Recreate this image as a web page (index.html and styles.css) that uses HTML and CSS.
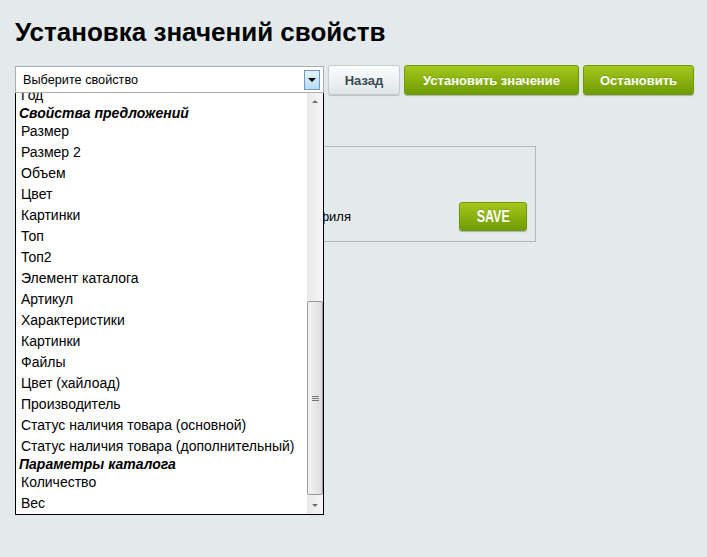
FILE: index.html
```html
<!DOCTYPE html>
<html lang="ru">
<head>
    <meta charset="UTF-8">
    <title>Установка значений свойств</title>
    <link rel="stylesheet" href="styles.css">
</head>
<body>
    <h1 class="page-title">Установка значений свойств</h1>

    <div class="toolbar">
        <div class="select-wrap">
            <div class="select">
                <span class="select-text">Выберите свойство</span>
                <span class="select-arrow"></span>
            </div>
            <div class="dropdown">
                <div class="options">
                    <div class="opt">Год</div>
                    <div class="opt-group">Свойства предложений</div>
                    <div class="opt">Размер</div>
                    <div class="opt">Размер 2</div>
                    <div class="opt">Объем</div>
                    <div class="opt">Цвет</div>
                    <div class="opt">Картинки</div>
                    <div class="opt">Топ</div>
                    <div class="opt">Топ2</div>
                    <div class="opt">Элемент каталога</div>
                    <div class="opt">Артикул</div>
                    <div class="opt">Характеристики</div>
                    <div class="opt">Картинки</div>
                    <div class="opt">Файлы</div>
                    <div class="opt">Цвет (хайлоад)</div>
                    <div class="opt">Производитель</div>
                    <div class="opt">Статус наличия товара (основной)</div>
                    <div class="opt">Статус наличия товара (дополнительный)</div>
                    <div class="opt-group">Параметры каталога</div>
                    <div class="opt">Количество</div>
                    <div class="opt">Вес</div>
                </div>
                <div class="scrollbar">
                    <span class="sb-arrow sb-up"></span>
                    <div class="sb-track">
                        <div class="sb-thumb"><span class="sb-grip"></span></div>
                    </div>
                    <span class="sb-arrow sb-down"></span>
                </div>
            </div>
        </div>
        <button class="btn btn-light">Назад</button>
        <button class="btn btn-green btn-set">Установить значение</button>
        <button class="btn btn-green btn-stop">Остановить</button>
    </div>

    <div class="panel">
        <div class="panel-row">
            <span class="panel-label">Сохранить текущие настройки в качестве профиля</span>
            <button class="btn btn-green btn-save"><span class="save-text">SAVE</span></button>
        </div>
    </div>
</body>
</html>
```

FILE: styles.css
```css
html {
    height: 100%;
}
body {
    box-sizing: border-box;
    min-height: 100%;
    margin: 0;
    padding: 17px 10px 0 15px;
    background-color: #e4eaeb;
    font-family: "Liberation Sans", Arial, sans-serif;
    color: #000;
}
.page-title {
    margin: 0;
    font-size: 26px;
    line-height: 30px;
    font-weight: bold;
}
.toolbar {
    display: flex;
    align-items: flex-start;
    margin-top: 18px;
}
.select-wrap {
    position: relative;
    flex-shrink: 0;
    width: 309px;
    margin-top: 1px;
    margin-right: 4px;
}
.select {
    box-sizing: border-box;
    height: 27px;
    display: flex;
    align-items: center;
    border: 1px solid #a7adb1;
    background-color: #fff;
}
.select-text {
    flex: 1;
    padding-left: 7px;
    font-size: 12.7px;
}
.select-arrow {
    box-sizing: border-box;
    width: 16px;
    height: 20px;
    margin-right: 3px;
    border: 1px solid #6d9ac4;
    background: linear-gradient(#e4f1fb, #b9dcf4);
    position: relative;
}
.select-arrow::after {
    content: "";
    position: absolute;
    left: 3px;
    top: 7px;
    border-left: 4px solid transparent;
    border-right: 4px solid transparent;
    border-top: 4px solid #000;
}
.dropdown {
    position: absolute;
    left: 0;
    top: 100%;
    z-index: 5;
    box-sizing: border-box;
    width: 309px;
    height: 422px;
    display: flex;
    border: 1px solid #000;
    border-top: none;
    background-color: #fff;
    overflow: hidden;
}
.options {
    flex: 1;
    margin-top: -8px;
    font-size: 14px;
}
.opt {
    height: 21px;
    line-height: 21px;
    padding-left: 5px;
    white-space: nowrap;
}
.opt-group {
    height: 15px;
    line-height: 15px;
    padding-left: 3px;
    font-weight: bold;
    font-style: italic;
    white-space: nowrap;
}
.scrollbar {
    width: 16px;
    flex-shrink: 0;
    display: flex;
    flex-direction: column;
    background: linear-gradient(to right, #e9e9e9, #f5f5f5);
}
.sb-arrow {
    height: 17px;
    position: relative;
}
.sb-arrow::after {
    content: "";
    position: absolute;
    left: 5px;
    border-left: 3px solid transparent;
    border-right: 3px solid transparent;
}
.sb-up::after {
    top: 7px;
    border-bottom: 3px solid #6e6e6e;
}
.sb-down::after {
    top: 7px;
    border-top: 3px solid #6e6e6e;
}
.sb-track {
    flex: 1;
    position: relative;
}
.sb-thumb {
    position: absolute;
    left: 0;
    right: 0;
    top: 191px;
    height: 194px;
    box-sizing: border-box;
    border: 1px solid #9a9a9a;
    border-radius: 2px;
    background: linear-gradient(to right, #f3f3f3, #dcdcdc);
    display: flex;
    align-items: center;
    justify-content: center;
}
.sb-grip {
    width: 7px;
    height: 5px;
    background: repeating-linear-gradient(#777 0 1px, transparent 1px 2px);
}
.btn {
    flex-shrink: 0;
    height: 30px;
    padding: 0;
    border-radius: 3px;
    font-family: "Liberation Sans", Arial, sans-serif;
    font-size: 13px;
    font-weight: bold;
    cursor: pointer;
    margin-right: 4px;
}
.btn-light {
    width: 72px;
    color: #3b4a53;
    border: 1px solid #c4cccf;
    background: linear-gradient(#fcfdfd, #e0e6e8);
    box-shadow: 0 1px 1px rgba(0, 0, 0, 0.18);
}
.btn-green {
    color: #fff;
    border: 1px solid #6e9a05;
    background: linear-gradient(#a5c71c, #6f9c02);
    box-shadow: 0 1px 1px rgba(0, 0, 0, 0.25);
    text-shadow: 0 -1px 0 rgba(0, 0, 0, 0.15);
}
.btn-set {
    width: 175px;
}
.btn-stop {
    width: 111px;
}
.panel {
    box-sizing: border-box;
    width: 521px;
    height: 96px;
    margin-top: 51px;
    border: 1px solid #b4b8b9;
    padding: 55px 8px 0 16px;
}
.panel-row {
    display: flex;
    align-items: center;
    justify-content: space-between;
}
.panel-label {
    width: 319px;
    text-align: right;
    font-size: 13px;
    white-space: nowrap;
    overflow: hidden;
}
.btn-save {
    width: 68px;
    height: 29px;
    margin: 0;
    font-size: 16px;
}
.save-text {
    display: inline-block;
    transform: scaleX(0.78);
}
```
